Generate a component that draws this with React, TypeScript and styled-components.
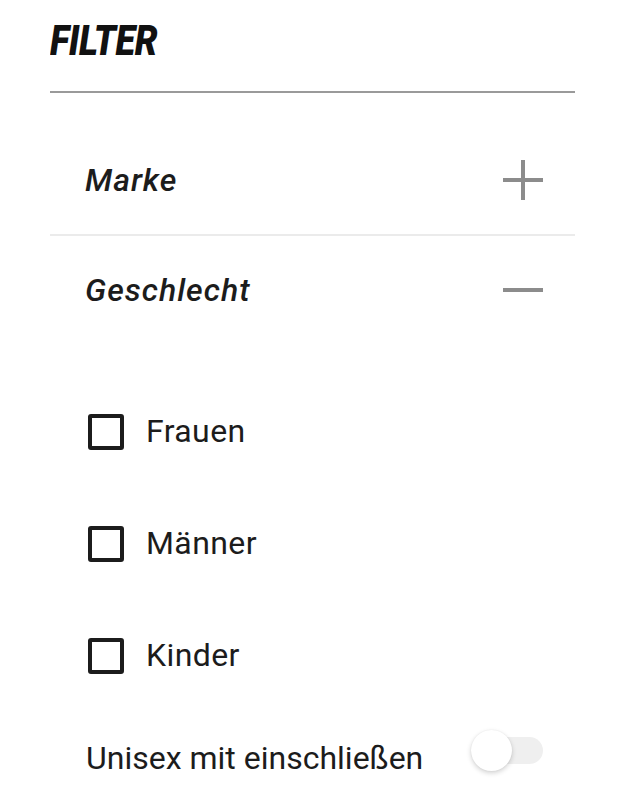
import { Fragment, useState } from 'react'
import styled, { createGlobalStyle } from 'styled-components'

const Globals = createGlobalStyle`
* {
	box-sizing: border-box;
}

body {
	margin: 0;
	padding: 0;
	background: #fff;
	font-family: 'Roboto', 'Liberation Sans', sans-serif;
	color: #1c1c1c;
}
`

const Panel = styled.aside`
	width: 618px;
	padding: 0 43px 0 50px;
`

const Header = styled.header`
	padding: 20px 0 29px;
	border-bottom: 2px solid #9a9a9a;
`

const Title = styled.h1`
	display: inline-block;
	margin: 0;
	font-size: 42px;
	line-height: 42px;
	font-weight: 900;
	font-style: italic;
	letter-spacing: -0.5px;
	transform: scaleX(0.86);
	transform-origin: left center;
	color: #111;
`

const Section = styled.section<{ $open?: boolean }>`
	border-bottom: ${p => (p.$open ? 'none' : '2px solid #ebebeb')};
`

const SectionHead = styled.button<{ $top: number; $bottom: number }>`
	display: flex;
	align-items: center;
	justify-content: space-between;
	width: 100%;
	padding: ${p => p.$top}px 32px ${p => p.$bottom}px 35px;
	border: 0;
	background: none;
	cursor: pointer;
	font: inherit;
	color: inherit;
	text-align: left;
`

const SectionLabel = styled.span`
	font-size: 32px;
	line-height: 40px;
	font-style: italic;
	font-weight: 500;
	letter-spacing: 1px;
	color: #1c1c1c;
`

const Toggler = styled.span<{ $open?: boolean }>`
	position: relative;
	width: 40px;
	height: 40px;
	flex: none;

	&::before,
	&::after {
		content: '';
		position: absolute;
		background: #8c8c8c;
	}

	&::before {
		left: 0;
		right: 0;
		top: 18px;
		height: 4px;
	}

	&::after {
		display: ${p => (p.$open ? 'none' : 'block')};
		top: 0;
		bottom: 0;
		left: 18px;
		width: 4px;
	}
`

const Options = styled.ul`
	list-style: none;
	margin: 0;
	padding: 66px 0 0 38px;
`

const Option = styled.li`
	display: flex;
	align-items: center;
	gap: 22px;
	height: 112px;
`

const Box = styled.input`
	appearance: none;
	margin: 0;
	width: 36px;
	height: 36px;
	border: 4px solid #1c1c1c;
	border-radius: 3px;
	background: #fff;
	flex: none;
	cursor: pointer;

	&:checked {
		background: #1c1c1c;
	}
`

const OptionLabel = styled.label`
	font-size: 32px;
	line-height: 40px;
	letter-spacing: 0.4px;
	color: #1c1c1c;
	cursor: pointer;
	margin-top: -3px;
`

const SwitchRow = styled.div`
	display: flex;
	align-items: center;
	justify-content: space-between;
	padding: 25px 32px 0 36px;
`

const SwitchText = styled.span`
	font-size: 32px;
	line-height: 40px;
	color: #1c1c1c;
`

const Track = styled.button<{ $on: boolean }>`
	position: relative;
	width: 72px;
	height: 27px;
	margin-bottom: 14px;
	padding: 0;
	border: 0;
	border-radius: 14px;
	background: ${p => (p.$on ? '#9a9a9a' : '#efefef')};
	cursor: pointer;
	flex: none;
`

const Knob = styled.span<{ $on: boolean }>`
	position: absolute;
	top: -7px;
	left: ${p => (p.$on ? '32px' : '0')};
	width: 41px;
	height: 41px;
	border-radius: 50%;
	background: #fff;
	box-shadow: 0 2px 5px rgba(0, 0, 0, 0.18), 0 0 2px rgba(0, 0, 0, 0.06);
`

const genders = ['Frauen', 'Männer', 'Kinder']

export default function App() {
	const [brandOpen, setBrandOpen] = useState(false)
	const [genderOpen, setGenderOpen] = useState(true)
	const [unisex, setUnisex] = useState(false)

	return (
		<Fragment>
			<Globals />
			<Panel>
				<Header>
					<Title>FILTER</Title>
				</Header>

				<Section>
					<SectionHead $top={67} $bottom={34} onClick={() => setBrandOpen(!brandOpen)}>
						<SectionLabel>Marke</SectionLabel>
						<Toggler $open={brandOpen} />
					</SectionHead>
				</Section>

				<Section $open={genderOpen}>
					<SectionHead $top={34} $bottom={0} onClick={() => setGenderOpen(!genderOpen)}>
						<SectionLabel>Geschlecht</SectionLabel>
						<Toggler $open={genderOpen} />
					</SectionHead>
					{genderOpen && (
						<Fragment>
							<Options>
								{genders.map(g => (
									<Option key={g}>
										<Box type="checkbox" id={`g-${g}`} />
										<OptionLabel htmlFor={`g-${g}`}>{g}</OptionLabel>
									</Option>
								))}
							</Options>
							<SwitchRow>
								<SwitchText>Unisex mit einschließen</SwitchText>
								<Track $on={unisex} onClick={() => setUnisex(!unisex)}>
									<Knob $on={unisex} />
								</Track>
							</SwitchRow>
						</Fragment>
					)}
				</Section>
			</Panel>
		</Fragment>
	)
}
